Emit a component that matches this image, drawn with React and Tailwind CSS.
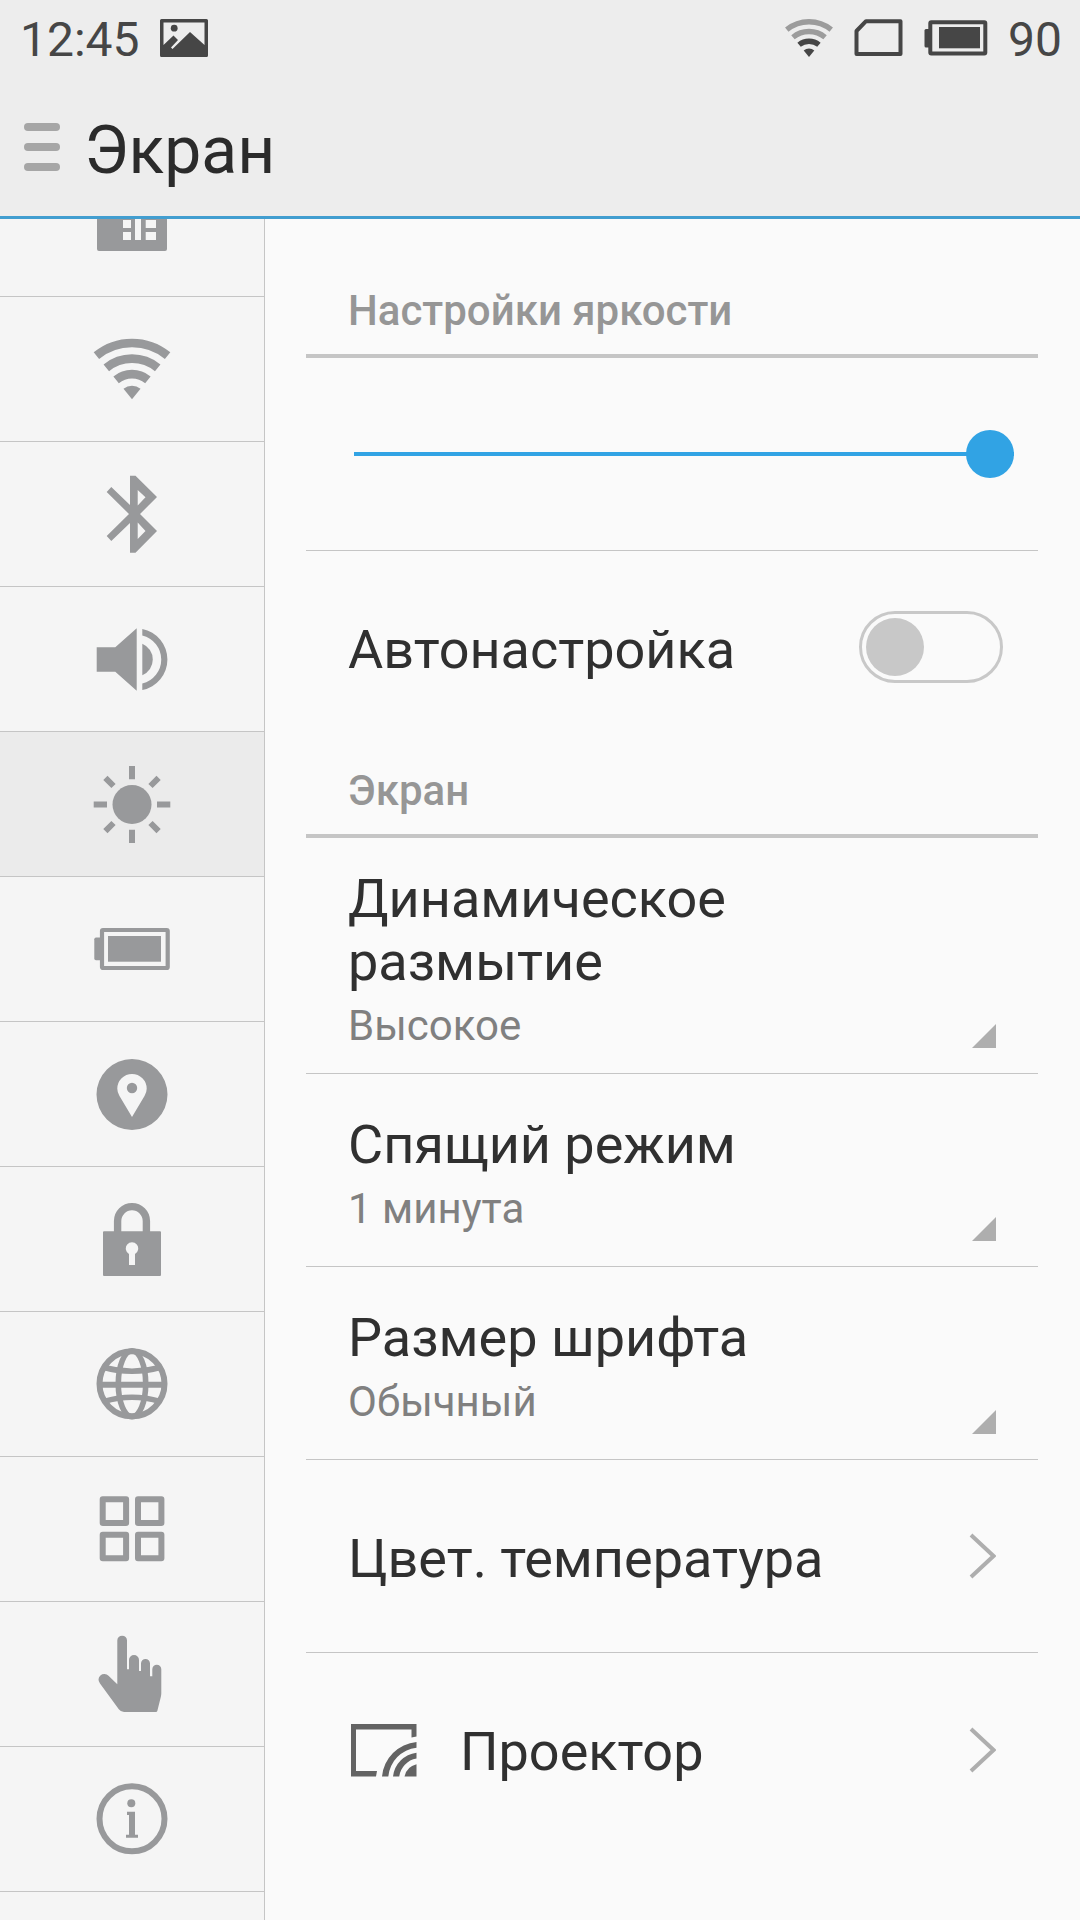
import React, { useState } from "react";

const WifiIcon = ({ className, weak = "currentColor" }) => (
  <svg viewBox="0 0 80 80" className={className} fill="none" strokeWidth="8.6">
    <path d="M4.4 26.6A56.4 56.4 0 0 1 75.6 26.6" stroke={weak} />
    <path d="M14.3 38.8A40.6 40.6 0 0 1 65.7 38.8" stroke={weak} />
    <path d="M24.1 50.8A25.2 25.2 0 0 1 55.9 50.8" stroke="currentColor" />
    <path d="M40 70.3L31.5 59.8A13.5 13.5 0 0 1 48.5 59.8Z" fill="currentColor" />
  </svg>
);

const Icon = ({ children }) => (
  <svg viewBox="0 0 80 80" className="size-20" fill="currentColor">
    {children}
  </svg>
);

const menu = [
  {
    id: "sim",
    label: "SIM-карты",
    icon: (
      <Icon>
        <path
          fillRule="evenodd"
          d="M20 13H73Q75 13 75 15V65Q75 67 73 67H7Q5 67 5 65V28ZM31 36V44H39V36ZM31 48V56H39V48ZM43 30V56H49V30ZM53.7 36V44H64V36ZM53.7 48V56H64V48Z"
        />
      </Icon>
    ),
  },
  { id: "wifi", label: "Wi-Fi", icon: <WifiIcon className="size-20" /> },
  {
    id: "bluetooth",
    label: "Bluetooth",
    icon: (
      <Icon>
        <path
          fillRule="evenodd"
          d="M38 1.7H43.5L65 23L48 40L65 57L43.5 78.7H38V49L19.3 67L14.7 62L37 40L14.7 18L19.3 13L38 31ZM45.7 16V31.5L53.5 23.3ZM45.7 48.5V65L53.5 57Z"
        />
      </Icon>
    ),
  },
  {
    id: "sound",
    label: "Звук",
    icon: (
      <Icon>
        <path d="M4.7 28.3H23.3L44.7 9.3V71.7L23.3 52.7H4.7Z" />
        <path d="M50.3 9.9A31.2 31.2 0 0 1 50.3 71.1V64.6A24.8 24.8 0 0 0 50.3 16.4Z" />
        <path d="M50.3 24.8A17 17 0 0 1 50.3 56.2Z" />
      </Icon>
    ),
  },
  {
    id: "display",
    label: "Экран",
    icon: (
      <Icon>
        <circle cx="40" cy="40.5" r="19.5" />
        <g stroke="currentColor" strokeWidth="6">
          <path d="M40 2V15.3M40 65.7V79M1.7 40.5H15M65 40.5H78.3" />
          <path d="M13.4 13.9L21.5 22M58.5 22L66.6 13.9M13.4 67.1L21.5 59M58.5 59L66.6 67.1" />
        </g>
      </Icon>
    ),
  },
  {
    id: "battery",
    label: "Питание",
    icon: (
      <Icon>
        <path d="M8 28.5H4Q2.3 28.5 2.3 30.2V49.5Q2.3 51.2 4 51.2H8Z" />
        <rect x="10" y="21" width="65.7" height="38" rx="1" fill="none" stroke="currentColor" strokeWidth="4.2" />
        <rect x="16" y="27" width="53" height="25.7" />
      </Icon>
    ),
  },
  {
    id: "location",
    label: "Местоположение",
    icon: (
      <Icon>
        <path
          fillRule="evenodd"
          d="M40 5A35.5 35.5 0 1 0 40 76A35.5 35.5 0 1 0 40 5ZM40 63L27.5 42Q25.3 38.5 25.3 34.7A14.7 14.7 0 0 1 54.7 34.7Q54.7 38.5 52.5 42Z"
        />
        <circle cx="40" cy="34" r="5.2" />
      </Icon>
    ),
  },
  {
    id: "lock",
    label: "Безопасность",
    icon: (
      <Icon>
        <path d="M25.6 34V22A14.4 14.4 0 0 1 54.4 22V34" fill="none" stroke="currentColor" strokeWidth="7.4" />
        <path
          fillRule="evenodd"
          d="M12 32.3H68Q69 32.3 69 33.3V76Q69 77 68 77H12Q11 77 11 76V33.3Q11 32.3 12 32.3ZM37 54.9V66H43V54.9A6.2 6.2 0 1 0 37 54.9Z"
        />
      </Icon>
    ),
  },
  {
    id: "language",
    label: "Язык и ввод",
    icon: (
      <Icon>
        <g fill="none" stroke="currentColor" strokeWidth="5.6">
          <circle cx="40" cy="39.8" r="32.5" strokeWidth="6" />
          <ellipse cx="40" cy="39.8" rx="13.7" ry="33" />
          <path d="M6 40.8H74" strokeWidth="6" />
          <path d="M12 23.5Q40 31 68 23.5M12 57.5Q40 49 68 57.5" />
        </g>
      </Icon>
    ),
  },
  {
    id: "apps",
    label: "Приложения",
    icon: (
      <Icon>
        <g fill="none" stroke="currentColor" strokeWidth="6" strokeLinejoin="round">
          <rect x="10.7" y="10.3" width="23.4" height="23.6" />
          <rect x="46" y="10.3" width="23.4" height="23.6" />
          <rect x="10.7" y="45.7" width="23.4" height="23.6" />
          <rect x="46" y="45.7" width="23.4" height="23.6" />
        </g>
      </Icon>
    ),
  },
  {
    id: "gestures",
    label: "Спец. возможности",
    icon: (
      <Icon>
        <path d="M25.3 50.3V6.5A4.85 4.85 0 0 1 35 6.5V35.3H37V26A5 5 0 0 1 47 26V37H49V29.5A4.5 4.5 0 0 1 58 29.5V42.3H60.3V35.2A4.5 4.5 0 0 1 69.3 35.2V59Q69.3 61 68.8 63L65.3 77Q65 78 64 78H32Q29 78 26.8 75.2L8 49.5A5.7 5.7 0 0 1 16.5 41.8Z" />
      </Icon>
    ),
  },
  {
    id: "about",
    label: "О телефоне",
    icon: (
      <Icon>
        <circle cx="40" cy="39.8" r="32.5" fill="none" stroke="currentColor" strokeWidth="6" />
        <circle cx="39.3" cy="24.3" r="4" />
        <path d="M35 32.7H43V55.7H46V58.7H34V55.7H37V36H35Z" />
      </Icon>
    ),
  },
];

const selects = [
  {
    id: "blur",
    title: "Динамическое размытие",
    options: ["Высокое", "Среднее", "Низкое"],
  },
  {
    id: "sleep",
    title: "Спящий режим",
    options: ["1 минута", "2 минуты", "5 минут"],
  },
  {
    id: "font",
    title: "Размер шрифта",
    options: ["Обычный", "Крупный"],
  },
];

const StatusBar = () => (
  <div className="flex h-[75px] items-center justify-between pl-5 pr-[18px] text-[48px] leading-[56px] text-[#464646]">
    <div className="flex items-center gap-5">
      <span className="pt-1">12:45</span>
      <svg viewBox="0 0 48 38" className="h-[38px] w-12" fill="currentColor">
        <path
          fillRule="evenodd"
          d="M1.5 0H46.5Q48 0 48 1.5V36.5Q48 38 46.5 38H1.5Q0 38 0 36.5V1.5Q0 0 1.5 0ZM3.5 3.5V26L13.500 16.500L18 21L11 28.5L12.5 30L30 13L44.5 26V3.5Z"
        />
        <circle cx="14.2" cy="9.2" r="3.4" />
      </svg>
    </div>
    <div className="flex items-center gap-5">
      <WifiIcon className="size-[50px]" weak="#9c9c9c" />
      <svg viewBox="0 0 50 38" className="h-[38px] w-[50px]" fill="none" stroke="currentColor" strokeWidth="4">
        <path d="M12 2.2H46.5V35H2.5V12Z" strokeLinejoin="round" />
      </svg>
      <svg viewBox="0 0 64 36" className="h-9 w-16" fill="currentColor">
        <path d="M5 9H2Q0.5 9 0.5 10.5V26Q0.5 27.500 2 27.500H5Z" />
        <rect x="6.300" y="2.300" width="55" height="31.200" rx="1" fill="none" stroke="currentColor" strokeWidth="4" />
        <rect x="15" y="7" width="41" height="21.300" />
      </svg>
      <span className="pt-1">90</span>
    </div>
  </div>
);

const Sidebar = ({ active, onSelect }) => (
  <nav className="w-[265px] shrink-0 overflow-hidden border-r border-[#c5c5c5] bg-[#f5f5f5] text-[#98999b]">
    {/* the list is scrolled a little way down */}
    <ul className="-mt-[67px]">
      {menu.map((item) => (
        <li key={item.id} className="border-b border-[#c5c5c5]">
          <a
            href={`#${item.id}`}
            aria-label={item.label}
            onClick={() => onSelect(item.id)}
            className={`flex h-36 items-center justify-center ${
              active === item.id ? "bg-[#ebebeb]" : ""
            }`}
          >
            {item.icon}
          </a>
        </li>
      ))}
    </ul>
  </nav>
);

const SectionTitle = ({ children }) => (
  <h2 className="flex h-[95px] items-end border-b-4 border-[#c5c5c5] px-[42px] pb-[18px] text-[42px] leading-[50px] font-medium text-[#969696]">
    {children}
  </h2>
);

const SelectRow = ({ id, title, options }) => (
  <div className="flex min-h-[193px] justify-between border-b border-[#c5c5c5] px-[42px]">
    <div className="flex flex-col items-start justify-center gap-2 pt-[29px] pb-[23px]">
      <label htmlFor={id} className="text-[54px] leading-[63px] text-[#303030]">
        {title}
      </label>
      <select
        id={id}
        className="appearance-none bg-transparent text-[42px] leading-[49px] text-[#808080] outline-none"
      >
        {options.map((option) => (
          <option key={option}>{option}</option>
        ))}
      </select>
    </div>
    <svg viewBox="0 0 24 24" className="mb-[25px] size-6 shrink-0 self-end" fill="#aeaeae">
      <path d="M24 0V24H0Z" />
    </svg>
  </div>
);

const LinkRow = ({ href, icon, children, last }) => (
  <a
    href={href}
    className={`flex h-[193px] items-center justify-between px-[42px] ${
      last ? "" : "border-b border-[#c5c5c5]"
    }`}
  >
    <span className="flex items-center gap-10">
      {icon}
      <span className="pt-1 text-[54px] leading-[63px] text-[#303030]">{children}</span>
    </span>
    <svg viewBox="0 0 28 48" className="h-12 w-7" fill="none" stroke="#aeaeae" strokeWidth="4">
      <path d="M3 3L25.500 24L3 45" />
    </svg>
  </a>
);

const ProjectorIcon = () => (
  <svg viewBox="0 0 72 60" className="h-[60px] w-[72px]" fill="#636363">
    <path d="M3 4H68.500V16.500L63.500 17.500V9.500H8V51H29L28 56.500H3Z" />
    <path d="M34 56.500A38 38 0 0 1 68.500 22V27.700A32 32 0 0 0 40.300 56.500Z" />
    <path d="M45 56.500A27 27 0 0 1 68.500 32.700V38.500A21 21 0 0 0 51.200 56.500Z" />
    <path d="M56.500 56.500A16 16 0 0 1 68.500 44.300V56.500Z" />
  </svg>
);

const App = () => {
  const [active, setActive] = useState("display");
  const [brightness, setBrightness] = useState(100);
  const [auto, setAuto] = useState(false);

  return (
    <div className="flex min-h-screen flex-col bg-[#fafafa] font-['Roboto',sans-serif]">
      <header className="border-b-[3px] border-[#429ed0] bg-[#ededed]">
        <StatusBar />
        <div className="flex h-[141px] items-center gap-6 px-6 pt-[3px]">
          <button type="button" aria-label="Меню" className="flex flex-col gap-3">
            <span className="h-2 w-9 rounded-full bg-[#a6a6a6]" />
            <span className="h-2 w-9 rounded-full bg-[#a6a6a6]" />
            <span className="h-2 w-9 rounded-full bg-[#a6a6a6]" />
          </button>
          <h1 className="pt-2 text-[66px] leading-[78px] text-[#2b2b2b]">Экран</h1>
        </div>
      </header>

      <div className="flex flex-1">
        <Sidebar active={active} onSelect={setActive} />

        <main className="min-w-0 flex-1 pt-11 pr-[42px] pl-[41px]">
          <section>
            <SectionTitle>Настройки яркости</SectionTitle>
            <div className="flex h-[193px] items-center border-b border-[#c5c5c5] pr-6 pl-12">
              <input
                type="range"
                aria-label="Яркость"
                min="0"
                max="100"
                value={brightness}
                onChange={(e) => setBrightness(e.target.value)}
                style={{
                  backgroundImage: `linear-gradient(to right, #31a3e4 ${brightness}%, #c8c8c8 ${brightness}%)`,
                }}
                className="h-1 w-full appearance-none outline-none [&::-webkit-slider-thumb]:size-12 [&::-webkit-slider-thumb]:appearance-none [&::-webkit-slider-thumb]:rounded-full [&::-webkit-slider-thumb]:bg-[#31a3e4]"
              />
            </div>
            <div className="flex h-48 items-center justify-between pr-[35px] pl-[42px]">
              <label htmlFor="auto" className="pt-1 text-[54px] leading-[63px] text-[#303030]">
                Автонастройка
              </label>
              <input
                id="auto"
                type="checkbox"
                role="switch"
                checked={auto}
                onChange={(e) => setAuto(e.target.checked)}
                className="flex h-[72px] w-36 appearance-none rounded-full border-[3px] border-[#c8c8c8] p-1 before:size-[58px] before:rounded-full before:bg-[#c8c8c8] checked:justify-end checked:border-[#31a3e4] checked:before:bg-[#31a3e4]"
              />
            </div>
          </section>

          <section>
            <SectionTitle>Экран</SectionTitle>
            {selects.map((row) => (
              <SelectRow key={row.id} {...row} />
            ))}
            <LinkRow href="#temperature">Цвет. температура</LinkRow>
            <LinkRow href="#projector" icon={<ProjectorIcon />} last>
              Проектор
            </LinkRow>
          </section>
        </main>
      </div>
    </div>
  );
};

export default App;
